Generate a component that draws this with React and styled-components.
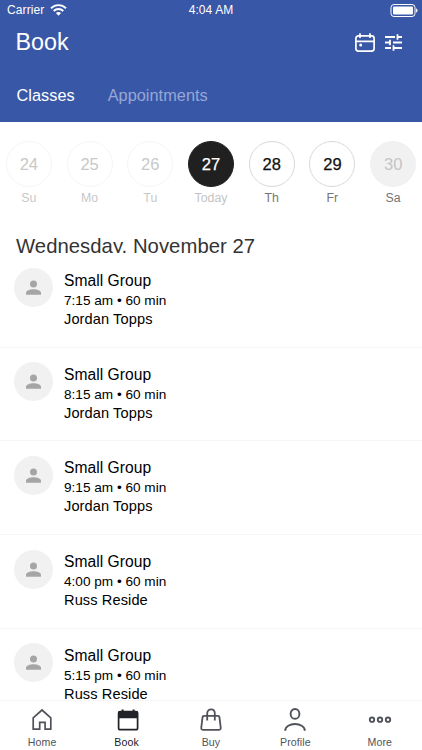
import React from "react";
import styled, { createGlobalStyle } from "styled-components";

const GlobalStyle = createGlobalStyle`
  * {
    box-sizing: border-box;
  }
  body {
    margin: 0;
    background: #ffffff;
    font-family: "Liberation Sans", Arial, sans-serif;
  }
`;

const Screen = styled.div`
  display: flex;
  flex-direction: column;
  width: 422px;
  height: 750px;
  overflow: hidden;
  background: #ffffff;
`;

const Header = styled.header`
  flex: none;
  height: 122px;
  color: #ffffff;
  background: #3957a7;
`;

const StatusBar = styled.div`
  display: grid;
  grid-template-columns: 1fr auto 1fr;
  align-items: center;
  height: 20px;
  padding: 0 4px 0 7px;
  font-size: 12px;
  line-height: 20px;
`;

const Carrier = styled.div`
  display: flex;
  align-items: center;
  gap: 6px;
  letter-spacing: 0.1px;
`;

const Clock = styled.span`
  margin-right: 3px;
  letter-spacing: 0.1px;
`;

const Battery = styled.div`
  display: flex;
  justify-content: flex-end;
`;

const TitleBar = styled.div`
  display: flex;
  align-items: center;
  justify-content: space-between;
  height: 45px;
  padding: 0 20px 0 15.5px;
`;

const Title = styled.h1`
  margin: 0;
  font-size: 23.3px;
  font-weight: 400;
  line-height: 45px;
`;

const Actions = styled.div`
  display: flex;
  align-items: center;
  gap: 10px;
`;

const Tabs = styled.nav`
  display: flex;
  gap: 33px;
  height: 57px;
  padding-left: 16.5px;
`;

const Tab = styled.a`
  font-size: 16.3px;
  line-height: 61px;
  letter-spacing: 0.04px;
  color: ${(p) => (p.$active ? "#ffffff" : "#96a7d6")};
`;

const Week = styled.div`
  display: grid;
  grid-template-columns: repeat(7, 1fr);
  flex: none;
  height: 108px;
  margin: 0 -1.5px;
  padding-top: 19.4px;
`;

const Day = styled.div`
  display: flex;
  flex-direction: column;
  align-items: center;
`;

const dayStyles = {
  past: { color: "#c8c8c8", background: "#ffffff", border: "#f5f5f5", label: "#c8c8c8" },
  today: { color: "#ffffff", background: "#212020", border: "#212020", label: "#c4c4c4" },
  open: { color: "#111111", background: "#ffffff", border: "#d9d9d9", label: "#757575" },
  closed: { color: "#c5c5c5", background: "#f1f1f1", border: "#f1f1f1", label: "#757575" },
};

const DayNumber = styled.div`
  width: 46px;
  height: 46px;
  border: 1px solid ${(p) => dayStyles[p.$kind].border};
  border-radius: 50%;
  font-size: 16.5px;
  line-height: 44px;
  text-align: center;
  color: ${(p) => dayStyles[p.$kind].color};
  background: ${(p) => dayStyles[p.$kind].background};
  -webkit-text-stroke: ${(p) => (p.$kind === "today" || p.$kind === "open" ? "0.25px" : "0")};
`;

const DayLabel = styled.span`
  margin-top: 2px;
  font-size: 12.3px;
  line-height: 18px;
  color: ${(p) => dayStyles[p.$kind].label};
`;

const DateHeading = styled.h2`
  flex: none;
  height: 23px;
  margin: 0;
  padding-left: 16px;
  overflow: hidden;
  font-size: 20.3px;
  font-weight: 400;
  line-height: 32px;
  letter-spacing: 0.04px;
  white-space: nowrap;
  color: #333333;
`;

const ClassList = styled.main`
  flex: 1;
  min-height: 0;
  padding-top: 0.75px;
  overflow: hidden;
`;

const ClassRow = styled.article`
  display: flex;
  height: 93.75px;
  padding: 14.5px 14px 0 13.5px;
  border-bottom: 1px solid #f5f5f5;
`;

const Avatar = styled.div`
  display: flex;
  align-items: center;
  justify-content: center;
  width: 39px;
  height: 39px;
  margin-right: 11.5px;
  border-radius: 50%;
  background: #f1f1f1;
`;

const ClassInfo = styled.div`
  padding-top: 2.5px;
  color: #000000;
`;

const ClassName = styled.div`
  font-size: 15.6px;
  line-height: 20px;
  letter-spacing: 0.05px;
`;

const ClassTime = styled.div`
  font-size: 13.6px;
  line-height: 19px;
`;

const Teacher = styled.div`
  font-size: 14.6px;
  line-height: 19px;
  letter-spacing: 0.1px;
`;

const TabBar = styled.footer`
  display: grid;
  grid-template-columns: repeat(5, 1fr);
  flex: none;
  height: 50px;
  border-top: 1px solid #f5f5f5;
  background: #ffffff;
`;

const TabItem = styled.a`
  display: flex;
  flex-direction: column;
  align-items: center;
  padding-top: 6px;
  font-size: 10.6px;
  line-height: 14px;
  letter-spacing: 0.1px;
  color: ${(p) => (p.$active ? "#222328" : "#50525a")};

  svg {
    margin-bottom: 2px;
  }
`;

const WifiIcon = () => (
  <svg width="17" height="12" viewBox="0 0 17 12" fill="none" stroke="#fff" strokeWidth="1.9">
    <path d="M1 4.2C5.2 0.1 11.8 0.1 16 4.2" />
    <path d="M3.7 7C6.4 4.4 10.6 4.4 13.3 7" />
    <path d="M5.9 9.1C7.5 7.6 9.5 7.6 11.1 9.1L8.5 11.8Z" fill="#fff" stroke="none" />
  </svg>
);

const BatteryIcon = () => (
  <svg width="28" height="13" viewBox="0 0 28 13" fill="none">
    <rect x="1" y="0.5" width="24" height="12" rx="3" stroke="#fff" />
    <rect x="3" y="2.5" width="20" height="8" rx="1" fill="#fff" />
    <path d="M26 4.5C28 5 28 8 26 8.5Z" fill="#fff" />
  </svg>
);

const CalendarIcon = () => (
  <svg width="20" height="19" viewBox="0 0 20 19" fill="none" stroke="#fff" strokeWidth="1.7">
    <rect x="0.9" y="2.9" width="18.2" height="15.2" rx="2.5" />
    <path d="M1 8.3H19M5 0.3V5M15 0.3V5" />
    <circle cx="5.7" cy="12" r="1.5" fill="#fff" stroke="none" />
  </svg>
);

const TuneIcon = () => (
  <svg width="17" height="17" viewBox="0 0 17 17" fill="none" stroke="#fff" strokeWidth="1.8">
    <path d="M0 3H10M12 3H17M12.5 0.2V5.8" />
    <path d="M0 8.5H5M8 8.5H17M5 5.7V11.3" />
    <path d="M0 14H6M8 14H17M8.5 11.2V16.8" />
  </svg>
);

const PersonIcon = () => (
  <svg width="15" height="15" viewBox="0 0 15 15" fill="#a5a5a5">
    <circle cx="7.5" cy="3.9" r="3.5" />
    <path d="M0 14.8V12.7C0 10.5 4 9.2 7.5 9.2S15 10.5 15 12.7V14.8Z" />
  </svg>
);

const iconProps = {
  width: 24,
  height: 26,
  viewBox: "0 0 24 26",
  fill: "none",
  stroke: "currentColor",
  strokeWidth: 1.7,
};

const icons = {
  home: (
    <svg {...iconProps}>
      <path d="M3.2 10.8L12 3L20.8 10.8V22.2H15.1V15.3H9.7V22.2H3.2Z" />
    </svg>
  ),
  book: (
    <svg {...iconProps} viewBox="-0.6 0 24 26">
      <rect x="3" y="4.7" width="19" height="18" rx="1.8" />
      <path d="M3.5 5H21.5V10.5H3.5Z" fill="currentColor" />
      <path d="M7 2.5V6M18 2.5V6" strokeWidth="2" />
    </svg>
  ),
  buy: (
    <svg {...iconProps} strokeWidth="1.8">
      <path d="M5 8.8H19Q20.2 8.8 20.4 10L21.7 20.5Q22 22.8 19.7 22.8H4.3Q2 22.8 2.3 20.5L3.6 10Q3.8 8.8 5 8.8Z" />
      <path d="M8.2 13.5V6.5C8.2 1 15.8 1 15.8 6.5V13.5" />
    </svg>
  ),
  profile: (
    <svg {...iconProps} strokeWidth="1.9">
      <ellipse cx="12" cy="6.9" rx="4.4" ry="4.9" />
      <path d="M2.2 23.7C2.2 14.8 21.8 14.8 21.8 23.7" />
    </svg>
  ),
  more: (
    <svg {...iconProps} strokeWidth="1.9">
      <circle cx="4" cy="12.7" r="2.2" />
      <circle cx="12" cy="12.7" r="2.2" />
      <circle cx="20" cy="12.7" r="2.2" />
    </svg>
  ),
};

const days = [
  { number: 24, label: "Su", kind: "past" },
  { number: 25, label: "Mo", kind: "past" },
  { number: 26, label: "Tu", kind: "past" },
  { number: 27, label: "Today", kind: "today" },
  { number: 28, label: "Th", kind: "open" },
  { number: 29, label: "Fr", kind: "open" },
  { number: 30, label: "Sa", kind: "closed" },
];

const classes = [
  { time: "7:15 am", teacher: "Jordan Topps" },
  { time: "8:15 am", teacher: "Jordan Topps" },
  { time: "9:15 am", teacher: "Jordan Topps" },
  { time: "4:00 pm", teacher: "Russ Reside" },
  { time: "5:15 pm", teacher: "Russ Reside" },
];

const tabs = [
  { id: "home", label: "Home" },
  { id: "book", label: "Book" },
  { id: "buy", label: "Buy" },
  { id: "profile", label: "Profile" },
  { id: "more", label: "More" },
];

function App() {
  return (
    <Screen>
      <GlobalStyle />
      <Header>
        <StatusBar>
          <Carrier>
            Carrier
            <WifiIcon />
          </Carrier>
          <Clock>4:04 AM</Clock>
          <Battery>
            <BatteryIcon />
          </Battery>
        </StatusBar>
        <TitleBar>
          <Title>Book</Title>
          <Actions>
            <CalendarIcon />
            <TuneIcon />
          </Actions>
        </TitleBar>
        <Tabs>
          <Tab $active>Classes</Tab>
          <Tab>Appointments</Tab>
        </Tabs>
      </Header>
      <Week>
        {days.map((day) => (
          <Day key={day.number}>
            <DayNumber $kind={day.kind}>{day.number}</DayNumber>
            <DayLabel $kind={day.kind}>{day.label}</DayLabel>
          </Day>
        ))}
      </Week>
      <DateHeading>Wednesday, November 27</DateHeading>
      <ClassList>
        {classes.map((item) => (
          <ClassRow key={item.time}>
            <Avatar>
              <PersonIcon />
            </Avatar>
            <ClassInfo>
              <ClassName>Small Group</ClassName>
              <ClassTime>{item.time} • 60 min</ClassTime>
              <Teacher>{item.teacher}</Teacher>
            </ClassInfo>
          </ClassRow>
        ))}
      </ClassList>
      <TabBar>
        {tabs.map((tab) => (
          <TabItem key={tab.id} $active={tab.id === "book"}>
            {icons[tab.id]}
            {tab.label}
          </TabItem>
        ))}
      </TabBar>
    </Screen>
  );
}

export default App;
